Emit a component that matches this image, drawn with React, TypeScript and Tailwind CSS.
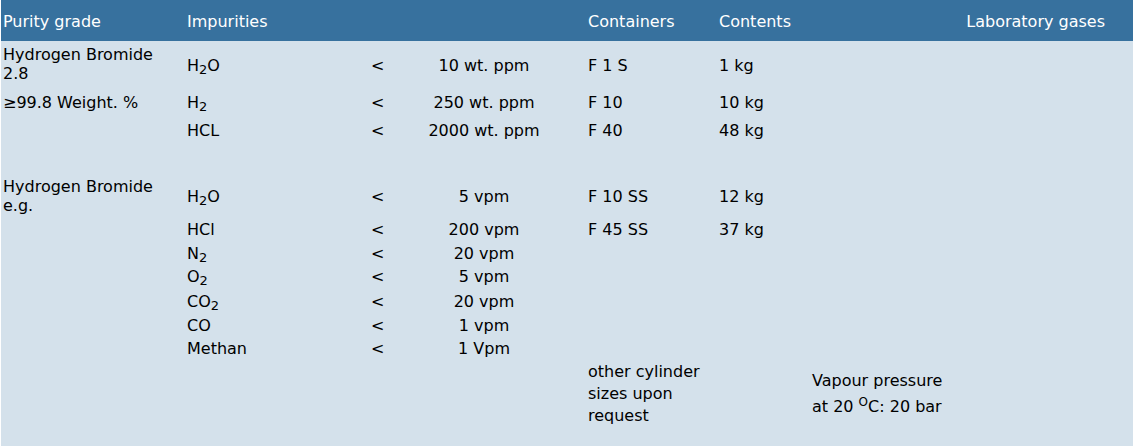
import React from 'react';

const font = { fontFamily: '"DejaVu Sans", Tahoma, Verdana, sans-serif' };

const cols = 'grid grid-cols-[184px_186px_30px_166px_151px_93px_1fr]';

type Row = {
  h: string;
  purity?: React.ReactNode;
  imp?: React.ReactNode;
  lt?: boolean;
  value?: string;
  container?: string;
  contents?: string;
};

const H = ({ n }: { n: string }) => <sub className="text-[13px] leading-none relative top-[3px]">{n}</sub>;

const rows: Row[] = [
  {
    h: 'h-[48px] pt-[2px]',
    purity: (
      <>
        Hydrogen Bromide
        <br />
        2.8
      </>
    ),
    imp: (
      <>
        H<H n="2" />O
      </>
    ),
    lt: true,
    value: '10 wt. ppm',
    container: 'F 1 S',
    contents: '1 kg',
  },
  {
    h: 'h-[24px] pt-[2px]',
    purity: '≥99.8 Weight. %',
    imp: (
      <>
        H<H n="2" />
      </>
    ),
    lt: true,
    value: '250 wt. ppm',
    container: 'F 10',
    contents: '10 kg',
  },
  { h: 'h-[34px] pt-[2px]', imp: 'HCL', lt: true, value: '2000 wt. ppm', container: 'F 40', contents: '48 kg' },
  { h: 'h-[25px]' },
  {
    h: 'h-[46px] pt-[3px]',
    purity: (
      <>
        Hydrogen Bromide
        <br />
        e.g.
      </>
    ),
    imp: (
      <>
        H<H n="2" />O
      </>
    ),
    lt: true,
    value: '5 vpm',
    container: 'F 10 SS',
    contents: '12 kg',
  },
  { h: 'h-[22px]', imp: 'HCl', lt: true, value: '200 vpm', container: 'F 45 SS', contents: '37 kg' },
  {
    h: 'h-[24px] pt-[2px]',
    imp: (
      <>
        N<H n="2" />
      </>
    ),
    lt: true,
    value: '20 vpm',
  },
  {
    h: 'h-[26px]',
    imp: (
      <>
        O<H n="2" />
      </>
    ),
    lt: true,
    value: '5 vpm',
  },
  {
    h: 'h-[24px]',
    imp: (
      <>
        CO<H n="2" />
      </>
    ),
    lt: true,
    value: '20 vpm',
  },
  { h: 'h-[23px]', imp: 'CO', lt: true, value: '1 vpm' },
  { h: 'h-[22px]', imp: 'Methan', lt: true, value: '1 Vpm' },
];

export default function App() {
  return (
    <div className="bg-white pl-px min-h-screen text-[16px] text-black" style={font}>
      <div className="bg-[#d4e1eb] min-h-[446px]">
        <div className={`${cols} h-[41px] pt-[2px] bg-[#37719e] text-white items-center`}>
          <div className="pl-[2px]">Purity grade</div>
          <div className="pl-[2px]">Impurities</div>
          <div />
          <div />
          <div className="pl-[21px]">Containers</div>
          <div className="pl-[1px]">Contents</div>
          <div className="text-right pr-[28px]">Laboratory gases</div>
        </div>

        {rows.map((r, i) => (
          <div key={i} className={`${cols} ${r.h} items-center`}>
            <div className="self-start pt-[2px] pl-[2px] leading-[19px]">{r.purity}</div>
            <div className="pl-[2px]">{r.imp}</div>
            <div className="pl-0">{r.lt ? '<' : ''}</div>
            <div className="text-center">{r.value}</div>
            <div className="pl-[21px]">{r.container}</div>
            <div className="pl-[1px]">{r.contents}</div>
            <div />
          </div>
        ))}

        <div className={`${cols} h-[66px] pt-[2px] items-center`}>
          <div />
          <div />
          <div />
          <div />
          <div className="pl-[21px] leading-[22px]">
            other cylinder
            <br />
            sizes upon
            <br />
            request
          </div>
          <div className="col-span-2 pl-[94px] leading-[26px]">
            Vapour pressure
            <br />
            at 20 <sup className="text-[12px]">O</sup>C: 20 bar
          </div>
        </div>
      </div>
    </div>
  );
}
